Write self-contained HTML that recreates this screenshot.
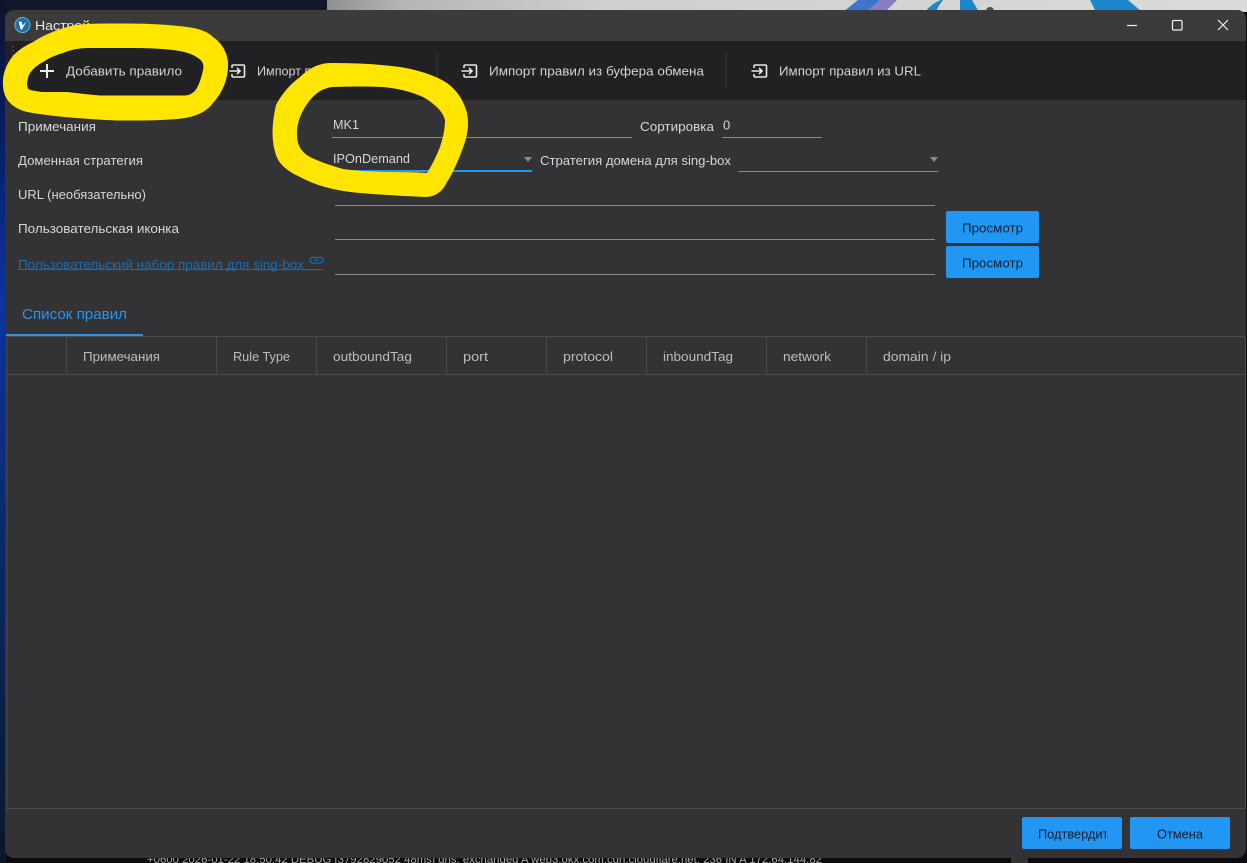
<!DOCTYPE html>
<html lang="ru">
<head>
<meta charset="utf-8">
<title>Настройки правил</title>
<style>
html,body{margin:0;padding:0;width:1247px;height:863px;overflow:hidden;background:#0c0c0e}
svg{display:block;filter:blur(.3px)}
text{font-family:"Liberation Sans","DejaVu Sans",sans-serif;font-size:13px;fill:#d6d6d6}
.tb{fill:#d2d2d2}
.th{fill:#bcbcbc}
.btn{fill:#0d2033;font-size:13px}
.g{stroke:#8a8a8a;stroke-width:1;fill:none}
.ico{fill:none;stroke:#e8e8e8;stroke-width:1.6}
</style>
</head>
<body>
<svg width="1247" height="863" viewBox="0 0 1247 863" xmlns="http://www.w3.org/2000/svg">
<defs>
<linearGradient id="strip" x1="0" y1="0" x2="0" y2="1">
<stop offset="0" stop-color="#0d1428"/><stop offset=".12" stop-color="#08195a"/><stop offset=".35" stop-color="#0a35a0"/><stop offset=".6" stop-color="#0a2a70"/><stop offset="1" stop-color="#0a1828"/>
</linearGradient>
<linearGradient id="wall" x1="0" y1="0" x2="1" y2="0">
<stop offset="0" stop-color="#8f8f8f"/><stop offset=".08" stop-color="#b5b5b3"/><stop offset=".3" stop-color="#cfcfcd"/><stop offset="1" stop-color="#dadad8"/>
</linearGradient>
<clipPath id="win"><rect x="5" y="10" width="1241" height="848" rx="9"/></clipPath>
<clipPath id="okclip"><rect x="1022" y="817" width="84.5" height="32"/></clipPath>
<clipPath id="ttl"><rect x="30" y="12" width="60" height="28"/></clipPath>
<g id="imp" class="ico">
<path d="M3 5V3.2A1.2 1.2 0 0 1 4.2 2H14.3a1.2 1.2 0 0 1 1.2 1.2v9.6a1.2 1.2 0 0 1-1.2 1.2H4.2A1.2 1.2 0 0 1 3 12.8V11"/>
<path d="M0.5 8H11M8 5l3 3-3 3"/>
</g>
</defs>

<!-- desktop background -->
<rect width="1247" height="863" fill="#0c0c0e"/>
<rect x="0" y="0" width="327" height="12" fill="#10182a"/>
<rect x="0" y="0" width="6" height="863" fill="url(#strip)"/>
<rect x="327" y="0" width="920" height="12" fill="url(#wall)"/>
<path d="M843 12L858 0H880L866 12Z" fill="#3f74cc"/>
<path d="M866 12L880 0H897L885 12Z" fill="#8a7cc0"/>
<path d="M925 12Q932 3 941 0H943Q938 6 936 12Z" fill="#1c86cc"/>
<path d="M960 0H972L979 12H960Z" fill="#1c86cc"/>
<circle cx="990" cy="11" r="4" fill="#5a4a42"/>
<path d="M1090 0H1128L1142 12H1096Z" fill="#1c86cc"/>
<rect x="1011" y="856" width="17" height="7" fill="#333"/>
<text x="147" y="863" style="font-size:11px;fill:#a8a8a8" textLength="675" lengthAdjust="spacingAndGlyphs">+0600 2026-01-22 18:50:42 DEBUG [3792829052 48ms] dns: exchanged A web3.okx.com.cdn.cloudflare.net. 236 IN A 172.64.144.82</text>

<!-- window -->
<g clip-path="url(#win)">
<rect x="5" y="10" width="1241" height="848" fill="#333235"/>
<rect x="5" y="10" width="1241" height="31" fill="#3b3b3c"/>
<rect x="5" y="41" width="1241" height="59" fill="#212023"/>
</g>

<!-- title bar -->
<circle cx="22.5" cy="25" r="7.5" fill="#1c6ea6"/>
<circle cx="22.5" cy="25" r="7.5" fill="none" stroke="#6fb4dc" stroke-width="1"/>
<path d="M18.5 21.5h3l1.2 4 4-4.5-4.6 8.5h-1.4z" fill="#fff"/>
<g clip-path="url(#ttl)"><text x="35" y="30" style="fill:#e6e6e6" textLength="120" lengthAdjust="spacingAndGlyphs">Настройки правил</text></g>
<path d="M1127 25.5h10" stroke="#efefef" stroke-width="1.2" fill="none"/>
<rect x="1172.5" y="20.5" width="9.5" height="9.5" rx="1.2" stroke="#efefef" stroke-width="1.2" fill="none"/>
<path d="M1218 20l10 10M1228 20l-10 10" stroke="#efefef" stroke-width="1.2" fill="none"/>

<!-- toolbar -->
<g fill="#3d3d3f"><rect x="12" y="46" width="2" height="2"/><rect x="12" y="50" width="2" height="2"/><rect x="12" y="54" width="2" height="2"/></g>
<path d="M40 71h14M47 64v14" stroke="#ececec" stroke-width="2" fill="none"/>
<text class="tb" x="66" y="75.5" textLength="116" lengthAdjust="spacingAndGlyphs">Добавить правило</text>
<use href="#imp" x="229" y="63"/>
<text class="tb" x="257" y="75.5" textLength="148" lengthAdjust="spacingAndGlyphs">Импорт правил из файла</text>
<path d="M437 53v35M726 53v35" stroke="#39383b" stroke-width="1"/>
<use href="#imp" x="461" y="63"/>
<text class="tb" x="489" y="75.5" textLength="215" lengthAdjust="spacingAndGlyphs">Импорт правил из буфера обмена</text>
<use href="#imp" x="751" y="63"/>
<text class="tb" x="779" y="75.5" textLength="142" lengthAdjust="spacingAndGlyphs">Импорт правил из URL</text>

<!-- form -->
<text x="18" y="131" textLength="78" lengthAdjust="spacingAndGlyphs">Примечания</text>
<text x="333" y="129" textLength="26" lengthAdjust="spacingAndGlyphs">MK1</text>
<path class="g" d="M332 137.5H632"/>
<text x="640" y="131" textLength="74" lengthAdjust="spacingAndGlyphs">Сортировка</text>
<text x="723" y="129.5" textLength="7">0</text>
<path class="g" d="M722 137.5H822"/>

<text x="18" y="165" textLength="125" lengthAdjust="spacingAndGlyphs">Доменная стратегия</text>
<text x="333" y="163" textLength="77" lengthAdjust="spacingAndGlyphs">IPOnDemand</text>
<rect x="332" y="170" width="200" height="2" fill="#2196f3"/>
<path d="M524 157h8l-4 5z" fill="#8b8b8b"/>
<text x="540" y="165" textLength="191" lengthAdjust="spacingAndGlyphs">Стратегия домена для sing-box</text>
<path class="g" d="M738 171.5H938"/>
<path d="M930 157h8l-4 5z" fill="#8b8b8b"/>

<text x="18" y="199" textLength="128" lengthAdjust="spacingAndGlyphs">URL (необязательно)</text>
<path class="g" d="M335 205.5H935"/>

<text x="18" y="233" textLength="161" lengthAdjust="spacingAndGlyphs">Пользовательская иконка</text>
<path class="g" d="M335 239.5H935"/>
<rect x="946" y="211" width="93" height="32" rx="2" fill="#2196f3"/>
<text class="btn" x="962" y="232.5" textLength="61" lengthAdjust="spacingAndGlyphs">Просмотр</text>

<text x="18" y="269" style="fill:#1a6db0" textLength="286" lengthAdjust="spacingAndGlyphs">Пользовательский набор правил для sing-box</text>
<path d="M18 269.5H323" stroke="#1a6db0" stroke-width="1" fill="none"/>
<rect x="310" y="257.5" width="13" height="5.5" rx="2.7" fill="none" stroke="#1a6db0" stroke-width="1.3"/>
<path d="M314 260.2h5" stroke="#1a6db0" stroke-width="1.2"/>
<path class="g" d="M335 274.5H935"/>
<rect x="946" y="246" width="93" height="32" rx="2" fill="#2196f3"/>
<text class="btn" x="962" y="267.5" textLength="61" lengthAdjust="spacingAndGlyphs">Просмотр</text>

<!-- tab -->
<text x="22" y="319" style="font-size:15px;fill:#2196f3" textLength="105" lengthAdjust="spacingAndGlyphs">Список правил</text>
<path d="M7 336.5H1245" stroke="#4a4a4c" stroke-width="1"/>
<rect x="6" y="334" width="137" height="2" fill="#2196f3"/>

<!-- table -->
<g stroke="#4a4a4c" stroke-width="1" fill="none">
<path d="M7 337V808.5H1245.5V337"/>
<path d="M7 374.5H1245"/>
<path d="M66.5 337V374M216.5 337V374M316.5 337V374M446.5 337V374M546.5 337V374M646.5 337V374M766.5 337V374M866.5 337V374"/>
</g>
<text class="th" x="83" y="361" textLength="77" lengthAdjust="spacingAndGlyphs">Примечания</text>
<text class="th" x="233" y="361" textLength="57" lengthAdjust="spacingAndGlyphs">Rule Type</text>
<text class="th" x="333" y="361" textLength="79" lengthAdjust="spacingAndGlyphs">outboundTag</text>
<text class="th" x="463" y="361" textLength="25" lengthAdjust="spacingAndGlyphs">port</text>
<text class="th" x="563" y="361" textLength="50" lengthAdjust="spacingAndGlyphs">protocol</text>
<text class="th" x="663" y="361" textLength="70" lengthAdjust="spacingAndGlyphs">inboundTag</text>
<text class="th" x="783" y="361" textLength="48" lengthAdjust="spacingAndGlyphs">network</text>
<text class="th" x="883" y="361" textLength="68" lengthAdjust="spacingAndGlyphs">domain / ip</text>

<!-- footer buttons -->
<rect x="1022" y="817" width="100" height="32" rx="2" fill="#2196f3"/>
<g clip-path="url(#okclip)"><text class="btn" x="1038" y="838.5" textLength="77" lengthAdjust="spacingAndGlyphs">Подтвердить</text></g>
<rect x="1130" y="817" width="100" height="32" rx="2" fill="#2196f3"/>
<text class="btn" x="1157" y="838.5" textLength="46" lengthAdjust="spacingAndGlyphs">Отмена</text>

<!-- yellow marker scribbles -->
<path fill="#ffe600" fill-rule="evenodd" d="M3 86Q2 72 10 60Q16 50 33 42Q50 31 73 25.5Q85 23.5 110 23.5Q160 23 187 27Q205 29 213 37Q226 46 228 62Q229 85 213 103Q206 113 190 117Q175 121 117 120.5Q60 118 27 112Q4 106 3 86Z
M27 83Q28 76 30 73Q35 66 43 62Q52 56 63 53Q75 48 87 48L133 48Q155 48 173 50Q190 52 198 58Q205 62 203 70Q201 80 197 88Q192 96 183 95.5L100 95.5Q83 94 67 92L42 92Q35 91 30 90Q27 89 27 83Z"/>
<path fill="#ffe600" fill-rule="evenodd" d="M300 77Q315 62 333 63Q370 63 400 67Q430 72 447 83Q462 94 467 113Q470 128 464 145Q455 170 447 182Q440 197 425 197Q380 195 350 192Q320 188 300 177Q280 168 276 155Q269 135 276 105Q285 88 300 77Z
M310 100Q320 88 333 87Q360 86 383 87Q405 89 423 97Q442 108 445 120Q445 132 440 147Q434 162 427 173Q415 172 393 172Q365 172 343 169Q322 163 310 157Q297 150 297 135Q296 118 310 100Z"/>
</svg>
</body>
</html>
